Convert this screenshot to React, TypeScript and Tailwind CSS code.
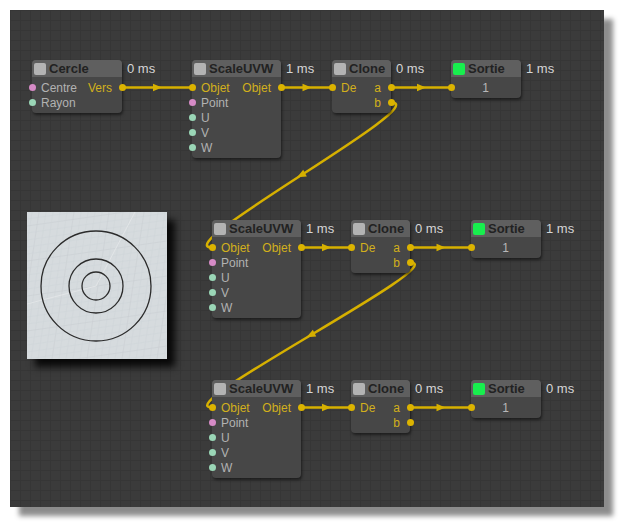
import React from "react";

type Sock = "pink" | "mint" | "yellow";
type Row = { left?: string; leftSock?: Sock; right?: string; center?: string };

const sockClass: Record<Sock, string> = {
  pink: "bg-[#d68bc6]",
  mint: "bg-[#9ad6b6]",
  yellow: "bg-[#dcb300]",
};

function NodeBox({
  pos,
  title,
  time,
  green,
  rows,
}: {
  pos: string;
  title: string;
  time: string;
  green?: boolean;
  rows: Row[];
}) {
  return (
    <div className={"absolute rounded-[4px] bg-[#474747] shadow-[1px_2px_3px_rgba(0,0,0,0.5)] " + pos}>
      <div className="relative h-[17px] bg-[#5f5f5f] rounded-t-[4px] flex items-center pl-[2px] gap-[3px]">
        <div className={"w-[12px] h-[12px] rounded-[2px] " + (green ? "bg-[#18ee4e]" : "bg-[#b3b3b3]")} />
        <span className="text-[13px] font-bold text-[#222222] leading-none whitespace-nowrap">{title}</span>
        <span className="absolute left-full ml-[5px] top-0 h-[17px] flex items-center whitespace-nowrap text-[13px] text-[#d6d6d6]">
          {time}
        </span>
      </div>
      <div className="pt-[3px] pb-[3px]">
        {rows.map((r, i) => (
          <div key={i} className="relative h-[15px] flex items-center justify-between pl-[9px] pr-[10px] text-[12px] leading-none">
            {r.leftSock && (
              <div className={"absolute left-[-3.5px] top-[4px] w-[7px] h-[7px] rounded-full " + sockClass[r.leftSock]} />
            )}
            {r.center !== undefined ? (
              <span className="w-full text-center text-[#b8b8b8]">{r.center}</span>
            ) : (
              <>
                <span className={r.leftSock === "yellow" ? "text-[#d2b01c]" : "text-[#b2b2b2]"}>{r.left ?? ""}</span>
                <span className="text-[#d2b01c]">{r.right ?? ""}</span>
              </>
            )}
            {r.right && (
              <div className="absolute right-[-3.5px] top-[4px] w-[7px] h-[7px] rounded-full bg-[#dcb300]" />
            )}
          </div>
        ))}
      </div>
    </div>
  );
}

const WIRE = "#d6b000";

function Arrow({ x, y, dx, dy }: { x: number; y: number; dx: number; dy: number }) {
  const a = (Math.atan2(dy, dx) * 180) / Math.PI;
  return <polygon points="5,0 -4,-3.8 -4,3.8" fill={WIRE} transform={`translate(${x} ${y}) rotate(${a})`} />;
}

function Straight({ x1, x2, y }: { x1: number; x2: number; y: number }) {
  return (
    <g>
      <line x1={x1} y1={y} x2={x2} y2={y} stroke={WIRE} strokeWidth={2.5} />
      <Arrow x={(x1 + x2) / 2} y={y} dx={1} dy={0} />
    </g>
  );
}

function Curve({ x1, y1, x2, y2, k }: { x1: number; y1: number; x2: number; y2: number; k: number }) {
  const d = `M ${x1} ${y1} C ${x1 + k} ${y1}, ${x2 - k} ${y2}, ${x2} ${y2}`;
  const mx = (x1 + 3 * (x1 + k) + 3 * (x2 - k) + x2) / 8;
  const my = (y1 + 3 * y1 + 3 * y2 + y2) / 8;
  return (
    <g>
      <path d={d} stroke={WIRE} strokeWidth={2.5} fill="none" />
      <Arrow x={mx} y={my} dx={x2 - x1 - 2 * k} dy={y2 - y1} />
    </g>
  );
}

const scaleRows: Row[] = [
  { left: "Objet", leftSock: "yellow", right: "Objet" },
  { left: "Point", leftSock: "pink" },
  { left: "U", leftSock: "mint" },
  { left: "V", leftSock: "mint" },
  { left: "W", leftSock: "mint" },
];
const cloneRows: Row[] = [
  { left: "De", leftSock: "yellow", right: "a" },
  { right: "b" },
];
const sortieRows: Row[] = [{ center: "1", leftSock: "yellow" }];

function Preview() {
  const fine: React.ReactNode[] = [];
  for (let i = -4; i < 30; i++) {
    const y = i * 7;
    fine.push(
      <line key={"h" + i} x1={0} y1={y + 14} x2={140} y2={y - 6} stroke={i % 5 === 0 ? "#c8cdd1" : "#cfd4d8"} strokeWidth={0.5} />
    );
    const x = i * 7;
    fine.push(
      <line key={"v" + i} x1={x - 10} y1={147} x2={x + 12} y2={0} stroke={i % 5 === 0 ? "#c8cdd1" : "#cfd4d8"} strokeWidth={0.5} />
    );
  }
  return (
    <div className="absolute left-[17px] top-[202px] w-[140px] h-[147px] bg-[#d6dbde] shadow-[8px_8px_7px_rgba(0,0,0,0.85)]">
      <svg width={140} height={147} viewBox="0 0 140 147" className="block">
        {fine}
        <line x1={108} y1={0} x2={69} y2={74} stroke="#e2e5e7" strokeWidth={1} />
        <line x1={0} y1={92} x2={69} y2={74} stroke="#e2e5e7" strokeWidth={1} />
        <circle cx={69} cy={74} r={55} fill="none" stroke="#2b2b2b" strokeWidth={1.3} />
        <circle cx={69} cy={74} r={27} fill="none" stroke="#2b2b2b" strokeWidth={1.3} />
        <circle cx={69} cy={74} r={14} fill="none" stroke="#2b2b2b" strokeWidth={1.3} />
      </svg>
    </div>
  );
}

export default function App() {
  return (
    <div className="w-[629px] h-[532px] bg-white pl-[10px] pt-[10px] font-['Liberation_Sans',Arial,sans-serif]">
      <div className="relative w-[594px] h-[497px] overflow-visible bg-[#3b3b3b] bg-[linear-gradient(to_right,#363636_1px,transparent_1px),linear-gradient(to_bottom,#363636_1px,transparent_1px)] [background-size:10px_10px] shadow-[9px_9px_5px_rgba(0,0,0,0.45)]">
        <svg width={594} height={497} className="absolute left-0 top-0">
          <Straight x1={112} x2={182} y={77.5} />
          <Straight x1={271} x2={322} y={77.5} />
          <Straight x1={381} x2={441} y={77.5} />
          <Curve x1={381} y1={92.5} x2={202} y2={237.5} k={45} />
          <Straight x1={291} x2={341} y={237.5} />
          <Straight x1={400} x2={461} y={237.5} />
          <Curve x1={400} y1={252.5} x2={202} y2={397.5} k={45} />
          <Straight x1={291} x2={341} y={397.5} />
          <Straight x1={400} x2={461} y={397.5} />
        </svg>

        <NodeBox
          pos="left-[22px] top-[50px] w-[90px]"
          title="Cercle"
          time="0 ms"
          rows={[
            { left: "Centre", leftSock: "pink", right: "Vers" },
            { left: "Rayon", leftSock: "mint" },
          ]}
        />
        <NodeBox pos="left-[182px] top-[50px] w-[89px]" title="ScaleUVW" time="1 ms" rows={scaleRows} />
        <NodeBox pos="left-[322px] top-[50px] w-[59px]" title="Clone" time="0 ms" rows={cloneRows} />
        <NodeBox pos="left-[441px] top-[50px] w-[70px]" title="Sortie" time="1 ms" green rows={sortieRows} />

        <NodeBox pos="left-[202px] top-[210px] w-[89px]" title="ScaleUVW" time="1 ms" rows={scaleRows} />
        <NodeBox pos="left-[341px] top-[210px] w-[59px]" title="Clone" time="0 ms" rows={cloneRows} />
        <NodeBox pos="left-[461px] top-[210px] w-[70px]" title="Sortie" time="1 ms" green rows={sortieRows} />

        <NodeBox pos="left-[202px] top-[370px] w-[89px]" title="ScaleUVW" time="1 ms" rows={scaleRows} />
        <NodeBox pos="left-[341px] top-[370px] w-[59px]" title="Clone" time="0 ms" rows={cloneRows} />
        <NodeBox pos="left-[461px] top-[370px] w-[70px]" title="Sortie" time="0 ms" green rows={sortieRows} />

        <Preview />
      </div>
    </div>
  );
}
